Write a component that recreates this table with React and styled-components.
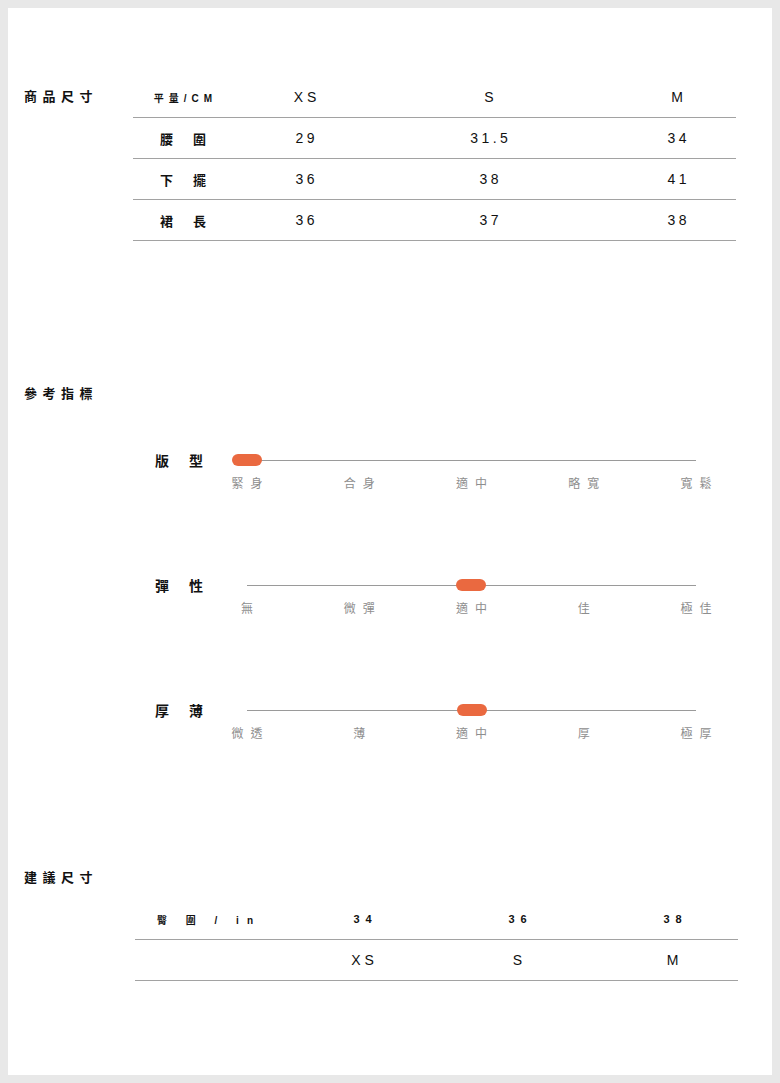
import React from "react";
import styled, { createGlobalStyle } from "styled-components";

const FONT = `"Liberation Sans", "Noto Sans CJK TC", Arial, sans-serif`;

const GlobalStyle = createGlobalStyle`
  html, body { margin: 0; padding: 0; background: #e8e8e8; }
  body { font-family: ${FONT}; color: #111; }
  #root { padding: 8px; }
`;

const Card = styled.main`
  background: #fff;
  min-height: 1067px;
  box-sizing: border-box;
  padding: 69px 36px 0 16px;
`;

const Section = styled.section`
  display: flex;
  align-items: flex-start;
  margin-top: ${(p) => p.$gap || 0}px;
`;

const SectionTitle = styled.h2`
  width: 109px;
  flex: none;
  margin: ${(p) => p.$offset || 0}px 0 0;
  font-size: 13px;
  line-height: 20px;
  font-weight: 700;
  letter-spacing: 5.5px;
  color: #111;
`;

const Content = styled.div`
  flex: 1;
  min-width: 0;
  padding-top: ${(p) => p.$pad || 0}px;
`;

const Table = styled.div`
  margin: 0 ${(p) => -(p.$indent || 0)}px 0 ${(p) => p.$indent || 0}px;
`;

const Row = styled.div`
  display: grid;
  grid-template-columns: ${(p) => p.$cols};
  height: 41px;
  box-sizing: border-box;
  border-bottom: 1px solid #a2a2a2;
  align-items: center;
`;

const Cell = styled.div`
  text-align: ${(p) => (p.$left ? "left" : "center")};
  padding-left: ${(p) => p.$pl || 0}px;
  font-size: ${(p) => p.$size || 14}px;
  letter-spacing: ${(p) => p.$ls ?? 3.5}px;
  font-weight: ${(p) => p.$weight || 400};
  white-space: nowrap;
  color: #111;
`;

const Sliders = styled.div`
  display: flex;
  flex-direction: column;
  gap: 83px;
  padding-left: 22px;
`;

const Slider = styled.div`
  display: flex;
  flex-direction: column;
`;

const SliderTop = styled.div`
  display: flex;
  align-items: center;
  height: 20px;
`;

const SliderLabel = styled.div`
  width: 92px;
  flex: none;
  font-size: 14px;
  font-weight: 700;
  letter-spacing: 3px;
  color: #111;
  white-space: nowrap;
`;

const Track = styled.div`
  position: relative;
  width: 449px;
  height: 1px;
  background: #9a9a9a;
`;

const Knob = styled.span`
  position: absolute;
  top: -6px;
  width: 30px;
  height: 12px;
  border-radius: 6px;
  background: #ea6940;
  transform: translateX(-50%);
`;

const Ticks = styled.div`
  display: grid;
  grid-template-columns: repeat(5, 112.25px);
  margin: 6px 0 0 ${92 - 56}px;
`;

const Tick = styled.span`
  text-align: center;
  font-size: 12px;
  line-height: 16px;
  letter-spacing: 7px;
  padding-left: 7px;
  color: #8e8e8e;
  white-space: nowrap;
`;

const sizeRows = [
  { label: "腰　圍", v: ["29", "31.5", "34"] },
  { label: "下　擺", v: ["36", "38", "41"] },
  { label: "裙　長", v: ["36", "37", "38"] },
];

const sliders = [
  { label: "版　型", value: 0, ticks: ["緊身", "合身", "適中", "略寬", "寬鬆"] },
  { label: "彈　性", value: 49.8, ticks: ["無", "微彈", "適中", "佳", "極佳"] },
  { label: "厚　薄", value: 50.2, ticks: ["微透", "薄", "適中", "厚", "極厚"] },
];

const COLS1 = "100px 144px 224px 152px";
const COLS2 = "150px 155px 155px 155px";

export default function App() {
  return (
    <>
      <GlobalStyle />
      <Card>
        <Section>
          <SectionTitle $offset={10}>商品尺寸</SectionTitle>
          <Content>
            <Table>
              <Row $cols={COLS1}>
                <Cell $size={10} $ls={5} $pl={5} $weight={700}>平量/CM</Cell>
                <Cell $ls={4} $pl={4}>XS</Cell>
                <Cell $ls={4} $pl={4}>S</Cell>
                <Cell $ls={4} $pl={4}>M</Cell>
              </Row>
              {sizeRows.map((r) => (
                <Row key={r.label} $cols={COLS1}>
                  <Cell $size={13} $pl={3.5} $weight={700}>{r.label}</Cell>
                  {r.v.map((v, i) => (
                    <Cell key={i} $pl={3.5}>{v}</Cell>
                  ))}
                </Row>
              ))}
            </Table>
          </Content>
        </Section>

        <Section $gap={143}>
          <SectionTitle>參考指標</SectionTitle>
          <Content $pad={66}>
            <Sliders>
              {sliders.map((s) => (
                <Slider key={s.label}>
                  <SliderTop>
                    <SliderLabel>{s.label}</SliderLabel>
                    <Track>
                      <Knob style={{ left: `${s.value}%` }} />
                    </Track>
                  </SliderTop>
                  <Ticks>
                    {s.ticks.map((t) => (
                      <Tick key={t}>{t}</Tick>
                    ))}
                  </Ticks>
                </Slider>
              ))}
            </Sliders>
          </Content>
        </Section>

        <Section $gap={126}>
          <SectionTitle>建議尺寸</SectionTitle>
          <Content $pad={31}>
            <Table $indent={2}>
              <Row $cols={COLS2}>
                <Cell $left $pl={22} $size={10} $ls={8} $weight={700}>臀 圍 / in</Cell>
                <Cell $size={11} $ls={6} $pl={6} $weight={700}>34</Cell>
                <Cell $size={11} $ls={6} $pl={6} $weight={700}>36</Cell>
                <Cell $size={11} $ls={6} $pl={6} $weight={700}>38</Cell>
              </Row>
              <Row $cols={COLS2}>
                <Cell />
                <Cell $ls={4} $pl={4}>XS</Cell>
                <Cell $ls={4} $pl={4}>S</Cell>
                <Cell $ls={4} $pl={4}>M</Cell>
              </Row>
            </Table>
          </Content>
        </Section>
      </Card>
    </>
  );
}
